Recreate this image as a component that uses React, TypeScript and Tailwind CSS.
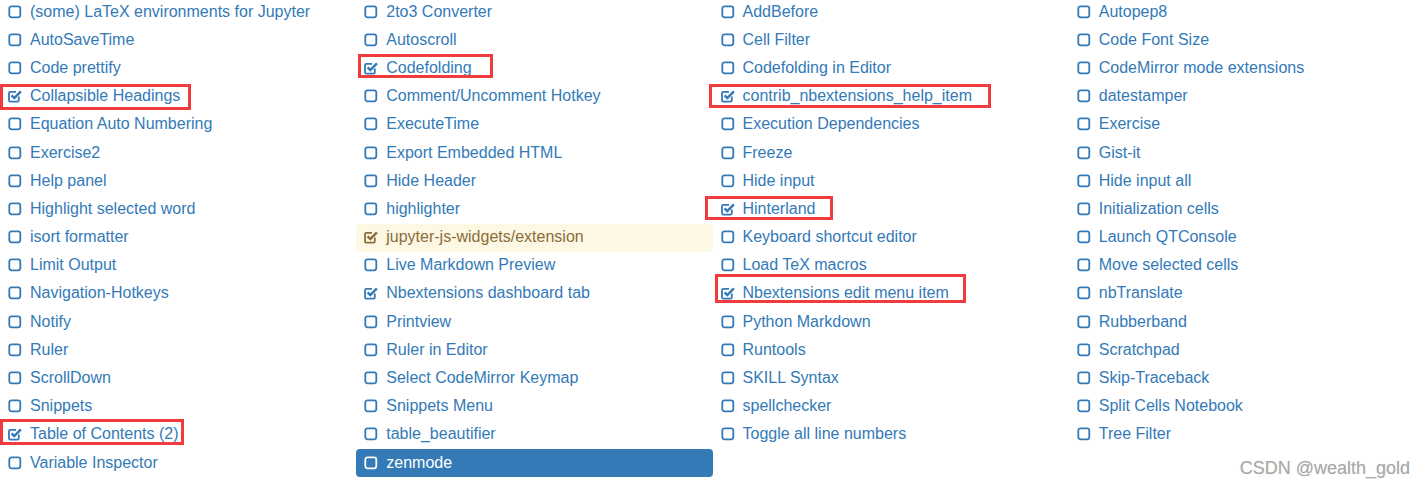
import React from "react";

type Ext = {
  name: string;
  checked?: boolean;
  tone?: "warn" | "active";
};

const extensions: Ext[] = [
  { name: "(some) LaTeX environments for Jupyter" },
  { name: "2to3 Converter" },
  { name: "AddBefore" },
  { name: "Autopep8" },
  { name: "AutoSaveTime" },
  { name: "Autoscroll" },
  { name: "Cell Filter" },
  { name: "Code Font Size" },
  { name: "Code prettify" },
  { name: "Codefolding", checked: true },
  { name: "Codefolding in Editor" },
  { name: "CodeMirror mode extensions" },
  { name: "Collapsible Headings", checked: true },
  { name: "Comment/Uncomment Hotkey" },
  { name: "contrib_nbextensions_help_item", checked: true },
  { name: "datestamper" },
  { name: "Equation Auto Numbering" },
  { name: "ExecuteTime" },
  { name: "Execution Dependencies" },
  { name: "Exercise" },
  { name: "Exercise2" },
  { name: "Export Embedded HTML" },
  { name: "Freeze" },
  { name: "Gist-it" },
  { name: "Help panel" },
  { name: "Hide Header" },
  { name: "Hide input" },
  { name: "Hide input all" },
  { name: "Highlight selected word" },
  { name: "highlighter" },
  { name: "Hinterland", checked: true },
  { name: "Initialization cells" },
  { name: "isort formatter" },
  { name: "jupyter-js-widgets/extension", checked: true, tone: "warn" },
  { name: "Keyboard shortcut editor" },
  { name: "Launch QTConsole" },
  { name: "Limit Output" },
  { name: "Live Markdown Preview" },
  { name: "Load TeX macros" },
  { name: "Move selected cells" },
  { name: "Navigation-Hotkeys" },
  { name: "Nbextensions dashboard tab", checked: true },
  { name: "Nbextensions edit menu item", checked: true },
  { name: "nbTranslate" },
  { name: "Notify" },
  { name: "Printview" },
  { name: "Python Markdown" },
  { name: "Rubberband" },
  { name: "Ruler" },
  { name: "Ruler in Editor" },
  { name: "Runtools" },
  { name: "Scratchpad" },
  { name: "ScrollDown" },
  { name: "Select CodeMirror Keymap" },
  { name: "SKILL Syntax" },
  { name: "Skip-Traceback" },
  { name: "Snippets" },
  { name: "Snippets Menu" },
  { name: "spellchecker" },
  { name: "Split Cells Notebook" },
  { name: "Table of Contents (2)", checked: true },
  { name: "table_beautifier" },
  { name: "Toggle all line numbers" },
  { name: "Tree Filter" },
  { name: "Variable Inspector" },
  { name: "zenmode", tone: "active" },
];

// annotation boxes drawn over the screenshot
const marks = [
  { l: 0, t: 84, w: 191, h: 26 },
  { l: 358, t: 54, w: 135, h: 24 },
  { l: 709, t: 84, w: 282, h: 24 },
  { l: 705, t: 196, w: 128, h: 24 },
  { l: 715, t: 274, w: 251, h: 29 },
  { l: 0, t: 419, w: 184, h: 26 },
];

const Box = ({ checked }: { checked?: boolean }) =>
  checked ? (
    <svg width="14" height="14" viewBox="0 0 14 14" className="shrink-0">
      <path
        d="M10.8 7.6 V11.2 a1.4 1.4 0 0 1 -1.4 1.4 H2.4 a1.4 1.4 0 0 1 -1.4 -1.4 V4.2 a1.4 1.4 0 0 1 1.4 -1.4 H8"
        fill="none"
        stroke="currentColor"
        strokeWidth="1.8"
      />
      <path d="M3.6 6.4 L6.3 9.1 L12.9 2.4" fill="none" stroke="currentColor" strokeWidth="2.5" />
    </svg>
  ) : (
    <svg width="14" height="14" viewBox="0 0 14 14" className="shrink-0">
      <rect x="1.3" y="1.3" width="11" height="11" rx="2.2" fill="none" stroke="currentColor" strokeWidth="1.8" />
    </svg>
  );

const Item = ({ ext }: { ext: Ext }) => {
  const tone =
    ext.tone === "active"
      ? "bg-[#337ab7] text-white"
      : ext.tone === "warn"
        ? "bg-[#fcf8e3] text-[#8a6d3b]"
        : "text-[#337ab7]";
  return (
    <div className={`flex items-center gap-[8px] rounded-[4px] pb-[1px] pl-[8px] ${tone}`}>
      <Box checked={ext.checked} />
      <span className="whitespace-nowrap">{ext.name}</span>
    </div>
  );
};

export default function App() {
  return (
    <div
      className="relative h-[491px] w-[1425px] overflow-hidden bg-white text-[16px]"
      style={{ fontFamily: '"Liberation Sans", Arial, sans-serif' }}
    >
      <div className="-mt-[2px] grid grid-cols-4 auto-rows-[28.2px]">
        {extensions.map((ext) => (
          <Item key={ext.name} ext={ext} />
        ))}
      </div>

      {marks.map((m, i) => (
        <div
          key={i}
          className="absolute border-[3px] border-[#f03c3c]"
          style={{ left: m.l, top: m.t, width: m.w, height: m.h }}
        />
      ))}

      <div className="absolute right-[15px] bottom-[9px] text-[18px] text-[#a8a8a8] [text-shadow:0_0_1px_#ddd]">
        CSDN @wealth_gold
      </div>
    </div>
  );
}
